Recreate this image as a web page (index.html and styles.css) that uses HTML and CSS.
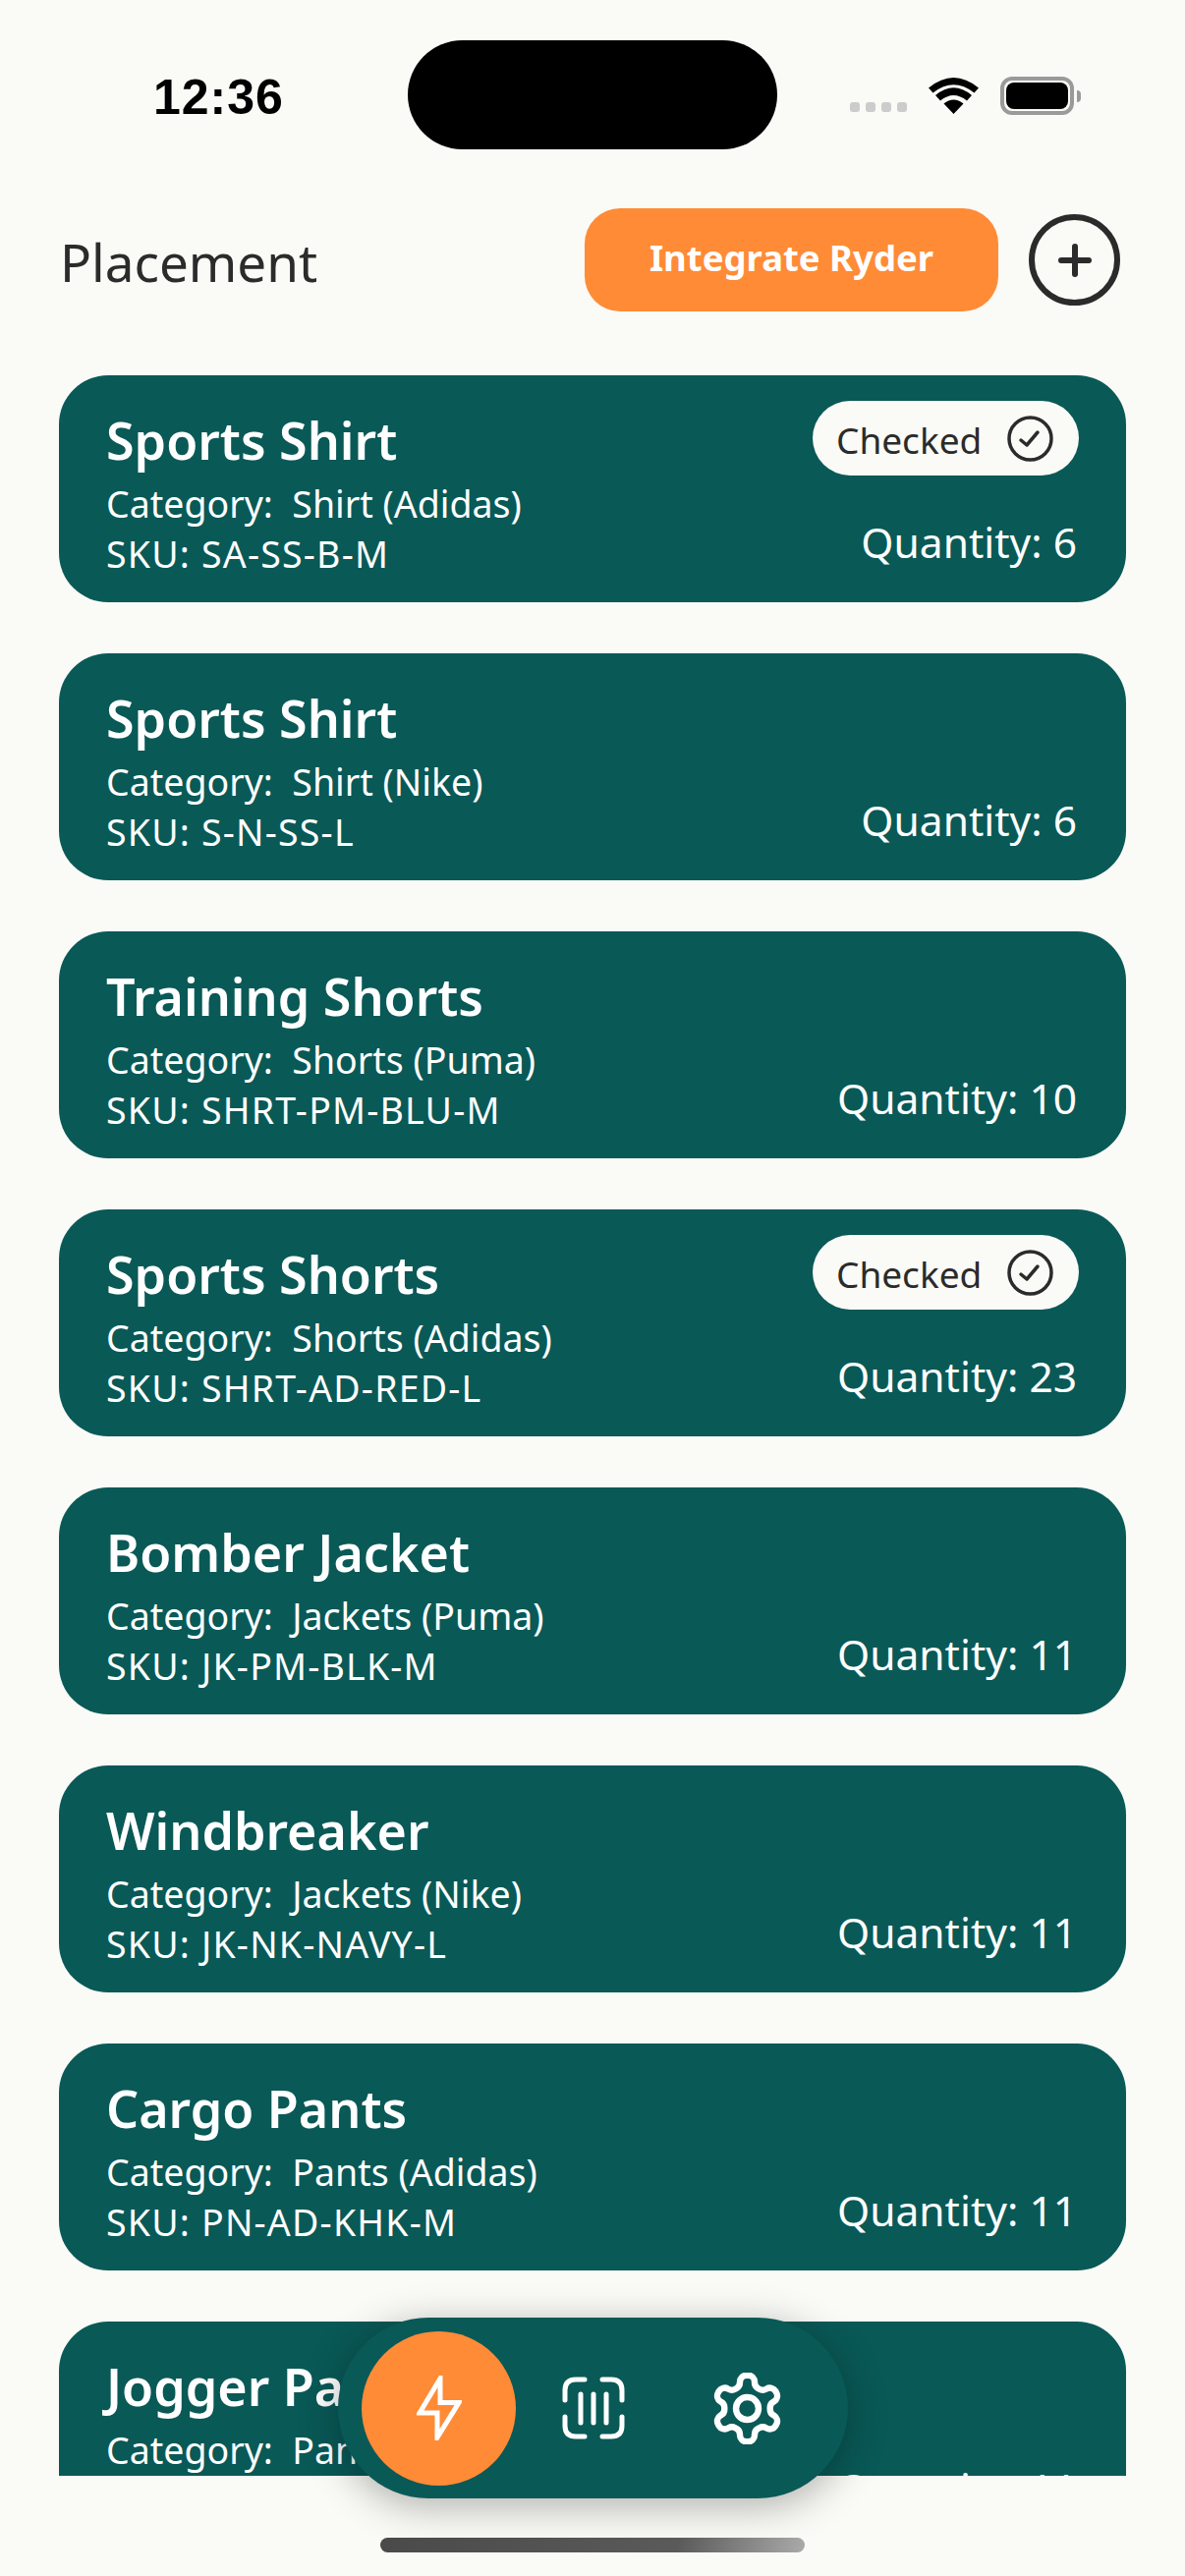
FILE: index.html
```html
<!DOCTYPE html>
<html lang="en">
<head>
    <meta charset="UTF-8">
    <title>Placement</title>
    <link rel="stylesheet" href="styles.css">
</head>
<body>
    <div class="phone">
        <div class="status-bar">
            <span class="time">12:36</span>
            <div class="island"></div>
            <div class="status-icons">
                <div class="signal"><i></i><i></i><i></i><i></i></div>
                <svg class="wifi" viewBox="0 0 51 37">
                    <path d="M25.5 37 15.5 26.5Q25.5 18.500 35.500 26.500Z" fill="#000"/>
                    <path d="M12 23.500 7 18Q25.500 2.500 44 18L39 23.500Q25.500 12.500 12 23.500Z" fill="#000"/>
                    <path d="M4.500 15.500 0 10.500Q25.500 -10.500 51 10.500L46.500 15.500Q25.500 -1 4.500 15.500Z" fill="#000"/>
                </svg>
                <div class="battery"><div class="battery-fill"></div></div>
                <div class="battery-nub"></div>
            </div>
        </div>

        <div class="header">
            <h1 class="page-title">Placement</h1>
            <button class="btn-integrate">Integrate Ryder</button>
            <button class="btn-add">
                <svg viewBox="0 0 34 34" width="34" height="34">
                    <path d="M17 3V31M3 17H31" stroke="#2b2b2b" stroke-width="6" stroke-linecap="round"/>
                </svg>
            </button>
        </div>

        <div class="list">
            <div class="card">
                <div class="card-info">
                    <div class="card-title">Sports Shirt</div>
                    <div class="card-line">Category:&nbsp; Shirt (Adidas)</div>
                    <div class="card-line card-sku">SKU: SA-SS-B-M</div>
                </div>
                <div class="card-side">
                    <div class="badge">Checked
                        <svg class="check" viewBox="0 0 47 47"><circle cx="23.500" cy="23.500" r="21.500"/><path d="M14 25 20 30 31 17"/></svg>
                    </div>
                    <div class="qty">Quantity: 6</div>
                </div>
            </div>
            <div class="card">
                <div class="card-info">
                    <div class="card-title">Sports Shirt</div>
                    <div class="card-line">Category:&nbsp; Shirt (Nike)</div>
                    <div class="card-line card-sku">SKU: S-N-SS-L</div>
                </div>
                <div class="card-side"><div class="qty">Quantity: 6</div></div>
            </div>
            <div class="card">
                <div class="card-info">
                    <div class="card-title">Training Shorts</div>
                    <div class="card-line">Category:&nbsp; Shorts (Puma)</div>
                    <div class="card-line card-sku">SKU: SHRT-PM-BLU-M</div>
                </div>
                <div class="card-side"><div class="qty">Quantity: 10</div></div>
            </div>
            <div class="card">
                <div class="card-info">
                    <div class="card-title">Sports Shorts</div>
                    <div class="card-line">Category:&nbsp; Shorts (Adidas)</div>
                    <div class="card-line card-sku">SKU: SHRT-AD-RED-L</div>
                </div>
                <div class="card-side">
                    <div class="badge">Checked
                        <svg class="check" viewBox="0 0 47 47"><circle cx="23.500" cy="23.500" r="21.500"/><path d="M14 25 20 30 31 17"/></svg>
                    </div>
                    <div class="qty">Quantity: 23</div>
                </div>
            </div>
            <div class="card">
                <div class="card-info">
                    <div class="card-title">Bomber Jacket</div>
                    <div class="card-line">Category:&nbsp; Jackets (Puma)</div>
                    <div class="card-line card-sku">SKU: JK-PM-BLK-M</div>
                </div>
                <div class="card-side"><div class="qty">Quantity: 11</div></div>
            </div>
            <div class="card">
                <div class="card-info">
                    <div class="card-title">Windbreaker</div>
                    <div class="card-line">Category:&nbsp; Jackets (Nike)</div>
                    <div class="card-line card-sku">SKU: JK-NK-NAVY-L</div>
                </div>
                <div class="card-side"><div class="qty">Quantity: 11</div></div>
            </div>
            <div class="card">
                <div class="card-info">
                    <div class="card-title">Cargo Pants</div>
                    <div class="card-line">Category:&nbsp; Pants (Adidas)</div>
                    <div class="card-line card-sku">SKU: PN-AD-KHK-M</div>
                </div>
                <div class="card-side"><div class="qty">Quantity: 11</div></div>
            </div>
            <div class="card">
                <div class="card-info">
                    <div class="card-title">Jogger Pants</div>
                    <div class="card-line">Category:&nbsp; Pants (Nike)</div>
                    <div class="card-line card-sku">SKU: PN-NK-BLK-L</div>
                </div>
                <div class="card-side"><div class="qty">Quantity: 11</div></div>
            </div>
        </div>

        <div class="tabbar">
            <div class="tab tab-active">
                <svg width="46" height="66" viewBox="0 0 46 66">
                    <path d="M24 3V27.500H43L21 63V38H3Z" fill="none" stroke="#fff" stroke-width="5"/>
                </svg>
            </div>
            <div class="tab">
                <svg width="64" height="64" viewBox="0 0 64 64" fill="none" stroke="#fff" stroke-width="5" stroke-linecap="round">
                    <path d="M3 24V14Q3 3 14 3H23M41 3H50Q61 3 61 14V24M61 41V50Q61 61 50 61H41M23 61H14Q3 61 3 50V41"/>
                    <path d="M19 18V47M32 18V47M45 18V47"/>
                </svg>
            </div>
            <div class="tab">
                <svg width="73" height="73" viewBox="1.200 1.200 21.600 21.600" fill="none" stroke="#fff" stroke-width="1.900">
                    <path d="M12.220 2h-.44a2 2 0 0 0-2 2v.18a2 2 0 0 1-1 1.730l-.43.25a2 2 0 0 1-2 0l-.15-.08a2 2 0 0 0-2.730.73l-.22.38a2 2 0 0 0 .73 2.730l.15.1a2 2 0 0 1 1 1.720v.51a2 2 0 0 1-1 1.740l-.15.09a2 2 0 0 0-.73 2.730l.22.38a2 2 0 0 0 2.730.73l.15-.08a2 2 0 0 1 2 0l.43.25a2 2 0 0 1 1 1.730V20a2 2 0 0 0 2 2h.44a2 2 0 0 0 2-2v-.18a2 2 0 0 1 1-1.730l.43-.25a2 2 0 0 1 2 0l.15.08a2 2 0 0 0 2.730-.73l.22-.39a2 2 0 0 0-.73-2.730l-.15-.08a2 2 0 0 1-1-1.740v-.5a2 2 0 0 1 1-1.740l.15-.09a2 2 0 0 0 .73-2.730l-.22-.38a2 2 0 0 0-2.730-.73l-.15.08a2 2 0 0 1-2 0l-.43-.25a2 2 0 0 1-1-1.730V4a2 2 0 0 0-2-2z"/>
                    <circle cx="12" cy="12" r="3.400"/>
                </svg>
            </div>
        </div>

        <div class="home-bar"></div>
    </div>
</body>
</html>
```

FILE: styles.css
```css
* {
    box-sizing: border-box;
}

body {
    margin: 0;
    background-color: #fafaf6;
    font-family: "Noto Sans", sans-serif;
}

.phone {
    position: relative;
    display: flex;
    flex-direction: column;
    width: 1206px;
    height: 2622px;
    overflow: hidden;
}

/* status bar */
.status-bar {
    display: flex;
    align-items: flex-start;
    height: 212px;
    padding: 41px 0 0 156px;
}

.time {
    width: 132px;
    margin-top: 28px;
    font-family: "Liberation Sans", sans-serif;
    font-size: 50px;
    line-height: 60px;
    font-weight: 700;
    letter-spacing: 1px;
    color: #000;
    white-space: nowrap;
}

.island {
    width: 376px;
    height: 111px;
    margin-left: 127px;
    background-color: #000;
    border-radius: 56px;
}

.status-icons {
    display: flex;
    align-items: flex-end;
    margin-left: 74px;
    margin-top: 37px;
}

.signal {
    display: flex;
    gap: 6px;
    margin-bottom: 3px;
}

.signal i {
    width: 10px;
    height: 10px;
    background-color: #ccc;
    border-radius: 3px;
}

.wifi {
    width: 51px;
    height: 37px;
    margin-left: 22px;
    margin-bottom: 1px;
}

.battery {
    width: 75px;
    height: 39px;
    margin-left: 22px;
    padding: 2px;
    border: 4px solid #9a9a9a;
    border-radius: 12px;
}

.battery-fill {
    height: 100%;
    background-color: #000;
    border-radius: 8px;
}

.battery-nub {
    width: 4px;
    height: 12px;
    margin: 0 0 13px 3px;
    background-color: #9a9a9a;
    border-radius: 0 4px 4px 0;
}

/* header */
.header {
    display: flex;
    align-items: center;
    height: 105px;
    padding: 0 66px 0 61px;
}

.page-title {
    margin: 4px auto 0 0;
    font-size: 53px;
    font-weight: 400;
    color: #2b2b2b;
}

.btn-integrate {
    width: 421px;
    height: 105px;
    padding: 0 0 6px;
    background-color: #ff8b36;
    color: #fff;
    border: none;
    border-radius: 36px;
    font-family: inherit;
    font-size: 36.5px;
    font-weight: 700;
}

.btn-add {
    display: flex;
    align-items: center;
    justify-content: center;
    width: 93px;
    height: 93px;
    margin-left: 31px;
    padding: 0;
    background: none;
    border: 6px solid #2b2b2b;
    border-radius: 50%;
}

/* cards */
.list {
    display: flex;
    flex-direction: column;
    gap: 52px;
    height: 2138px;
    margin-top: 65px;
    padding: 0 60px;
    overflow: hidden;
}

.card {
    display: flex;
    flex-shrink: 0;
    justify-content: space-between;
    height: 231px;
    padding: 0 48px;
    background-color: #095957;
    border-radius: 50px;
    color: #fff;
}

.card-title {
    margin-top: 34px;
    font-size: 52px;
    line-height: 64px;
    font-weight: 600;
}

.card-line {
    margin-top: 3px;
    font-size: 37.5px;
    line-height: 48px;
    font-weight: 400;
    white-space: nowrap;
}

.card-title + .card-line {
    margin-top: 9px;
}

.card-sku {
    letter-spacing: 1.200px;
}

.card-side {
    display: flex;
    flex-direction: column;
    align-items: flex-end;
    justify-content: flex-end;
    padding-bottom: 34px;
}

.badge {
    display: flex;
    align-items: center;
    justify-content: space-between;
    width: 271px;
    height: 76px;
    margin-bottom: auto;
    margin-top: 26px;
    padding: 2px 26px 0 24px;
    background-color: #fafaf6;
    border-radius: 38px;
    color: #2b2b2b;
    font-size: 37px;
}

.check {
    width: 47px;
    height: 47px;
    margin-top: -2px;
    fill: none;
    stroke: #2b2b2b;
    stroke-width: 3.500;
    stroke-linecap: round;
    stroke-linejoin: round;
}

.qty {
    margin-right: 2px;
    font-size: 42.5px;
    line-height: 54px;
}

/* floating tab bar */
.tabbar {
    position: absolute;
    left: 344px;
    top: 2359px;
    display: flex;
    align-items: center;
    width: 519px;
    height: 184px;
    padding-left: 24px;
    background-color: #095957;
    border-radius: 92px;
    box-shadow: 0 8px 40px rgba(0, 0, 0, 0.3);
}

.tab {
    display: flex;
    align-items: center;
    justify-content: center;
    width: 157px;
    height: 157px;
}

.tab-active {
    background-color: #ff8b36;
    border-radius: 50%;
}

.home-bar {
    position: absolute;
    left: 387px;
    top: 2583px;
    width: 432px;
    height: 15px;
    background: linear-gradient(100deg, #4a4a4a 0%, #5a5a5a 70%, #aaa 100%);
    border-radius: 8px;
}
```
